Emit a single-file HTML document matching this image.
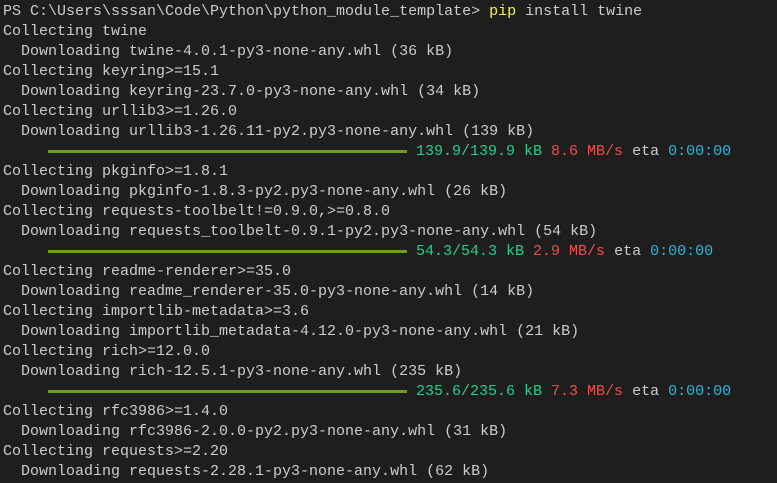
<!DOCTYPE html><html><head><style>
body{margin:0;background:#1e1e1e;width:777px;height:483px;overflow:hidden}
pre{margin:0;position:absolute;left:3px;top:2px;font-family:"Liberation Mono",monospace;font-size:15px;line-height:20px;color:#cccccc}
.y{color:#f5f543}.g{color:#23d18b}.r{color:#f14c4c}.c{color:#29b8db}
.bar{display:inline-block;width:359px;height:3px;background:#729c1f;vertical-align:middle;margin-left:45px;margin-right:9px}
</style></head><body><pre>PS C:\Users\sssan\Code\Python\python_module_template&gt; <span class="y">pip</span> install twine
Collecting twine
  Downloading twine-4.0.1-py3-none-any.whl (36 kB)
Collecting keyring&gt;=15.1
  Downloading keyring-23.7.0-py3-none-any.whl (34 kB)
Collecting urllib3&gt;=1.26.0
  Downloading urllib3-1.26.11-py2.py3-none-any.whl (139 kB)
<span class="bar"></span><span class="g">139.9/139.9 kB</span> <span class="r">8.6 MB/s</span> eta <span class="c">0:00:00</span>
Collecting pkginfo&gt;=1.8.1
  Downloading pkginfo-1.8.3-py2.py3-none-any.whl (26 kB)
Collecting requests-toolbelt!=0.9.0,&gt;=0.8.0
  Downloading requests_toolbelt-0.9.1-py2.py3-none-any.whl (54 kB)
<span class="bar"></span><span class="g">54.3/54.3 kB</span> <span class="r">2.9 MB/s</span> eta <span class="c">0:00:00</span>
Collecting readme-renderer&gt;=35.0
  Downloading readme_renderer-35.0-py3-none-any.whl (14 kB)
Collecting importlib-metadata&gt;=3.6
  Downloading importlib_metadata-4.12.0-py3-none-any.whl (21 kB)
Collecting rich&gt;=12.0.0
  Downloading rich-12.5.1-py3-none-any.whl (235 kB)
<span class="bar"></span><span class="g">235.6/235.6 kB</span> <span class="r">7.3 MB/s</span> eta <span class="c">0:00:00</span>
Collecting rfc3986&gt;=1.4.0
  Downloading rfc3986-2.0.0-py2.py3-none-any.whl (31 kB)
Collecting requests&gt;=2.20
  Downloading requests-2.28.1-py3-none-any.whl (62 kB)</pre></body></html>
